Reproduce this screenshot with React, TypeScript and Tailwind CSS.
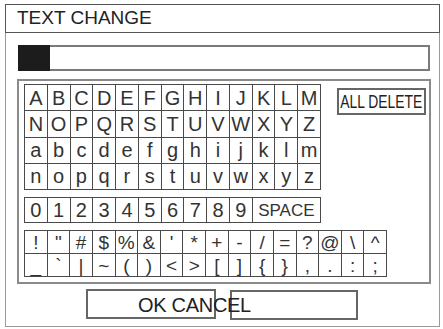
import React from "react";

const letters = [
  "ABCDEFGHIJKLM",
  "NOPQRSTUVWXYZ",
  "abcdefghijklm",
  "nopqrstuvwxyz",
];
const digits = "0123456789".split("");
const sym1 = ["!", "\"", "#", "$", "%", "&", "'", "*", "+", "-", "/", "=", "?", "@", "\\", "^"];
const sym2 = ["_", "`", "|", "~", "(", ")", "<", ">", "[", "]", "{", "}", ",", ".", ":", ";"];

function Cell({ ch, small }: { ch: string; small?: boolean }) {
  return (
    <div
      className={`flex items-center justify-center border-r border-b border-[#4a4a4a] leading-none text-[#333] ${
        small ? "text-[19px]" : "text-[20px]"
      }`}
    >
      {ch}
    </div>
  );
}

export default function App() {
  return (
    <div className="w-[443px] h-[329px] bg-white pl-[5px] pt-[4px] font-['Liberation_Sans',Arial,sans-serif] overflow-hidden">
      <div className="w-[435px] h-[323px] border border-[#9a9a9a] flex flex-col">
        {/* Title */}
        <div className="-m-px h-[29px] border border-[#555] flex items-center pl-[11px] text-[19px] text-[#222]">
          TEXT CHANGE
        </div>

        {/* Input */}
        <div className="ml-[12px] mt-[13px] w-[412px] h-[26px] border-2 border-[#7a7a7a] flex">
          <div className="-ml-[2px] -my-[2px] w-[32px] bg-[#1c1c1c]" />
        </div>

        {/* Keyboard frame */}
        <div className="ml-[11px] mt-[8px] w-[414px] h-[205px] border-2 border-[#8a8a8a] flex flex-col pl-[5px] pt-[3px]">
          <div className="flex items-start">
            <div className="shrink-0 w-[297px] h-[106px] grid grid-cols-[repeat(13,1fr)] grid-rows-[repeat(4,1fr)] border-l border-t border-[#4a4a4a]">
              {letters.join("").split("").map((c, i) => (
                <Cell key={i} ch={c} />
              ))}
            </div>

            <div className="shrink-0 ml-[16px] mt-[4px] w-[89px] h-[27px] border-2 border-[#666] flex items-center justify-center overflow-hidden">
              <span className="shrink-0 inline-block scale-x-[0.73] whitespace-nowrap text-[19px] leading-none text-[#222]">
                ALL DELETE
              </span>
            </div>
          </div>

          <div className="mt-[7px] w-[297px] h-[26px] grid grid-cols-[repeat(13,1fr)] border-l border-t border-[#4a4a4a]">
            {digits.map((d) => (
              <Cell key={d} ch={d} />
            ))}
            <div className="col-span-3 flex items-center justify-center border-r border-b border-[#4a4a4a] text-[17px] leading-none text-[#333]">
              SPACE
            </div>
          </div>

          <div className="mt-[7px] w-[363px] h-[47px] grid grid-cols-[repeat(16,1fr)] grid-rows-[repeat(2,1fr)] border-l border-t border-[#4a4a4a]">
            {sym1.map((c, i) => (
              <Cell key={"a" + i} ch={c} small />
            ))}
            {sym2.map((c, i) => (
              <Cell key={"b" + i} ch={c} small />
            ))}
          </div>
        </div>

        {/* OK / CANCEL */}
        <div className="relative ml-[80px] mt-[5px] flex">
          <div className="w-[130px] h-[30px] border-2 border-[#666]" />
          <div className="ml-[14px] mt-px w-[128px] h-[30px] border-2 border-[#666]" />
          <div className="absolute left-[52px] top-[6px] text-[20px] leading-[20px] text-[#222] whitespace-nowrap tracking-[-0.3px]">
            OK CANCEL
          </div>
        </div>
      </div>
    </div>
  );
}
